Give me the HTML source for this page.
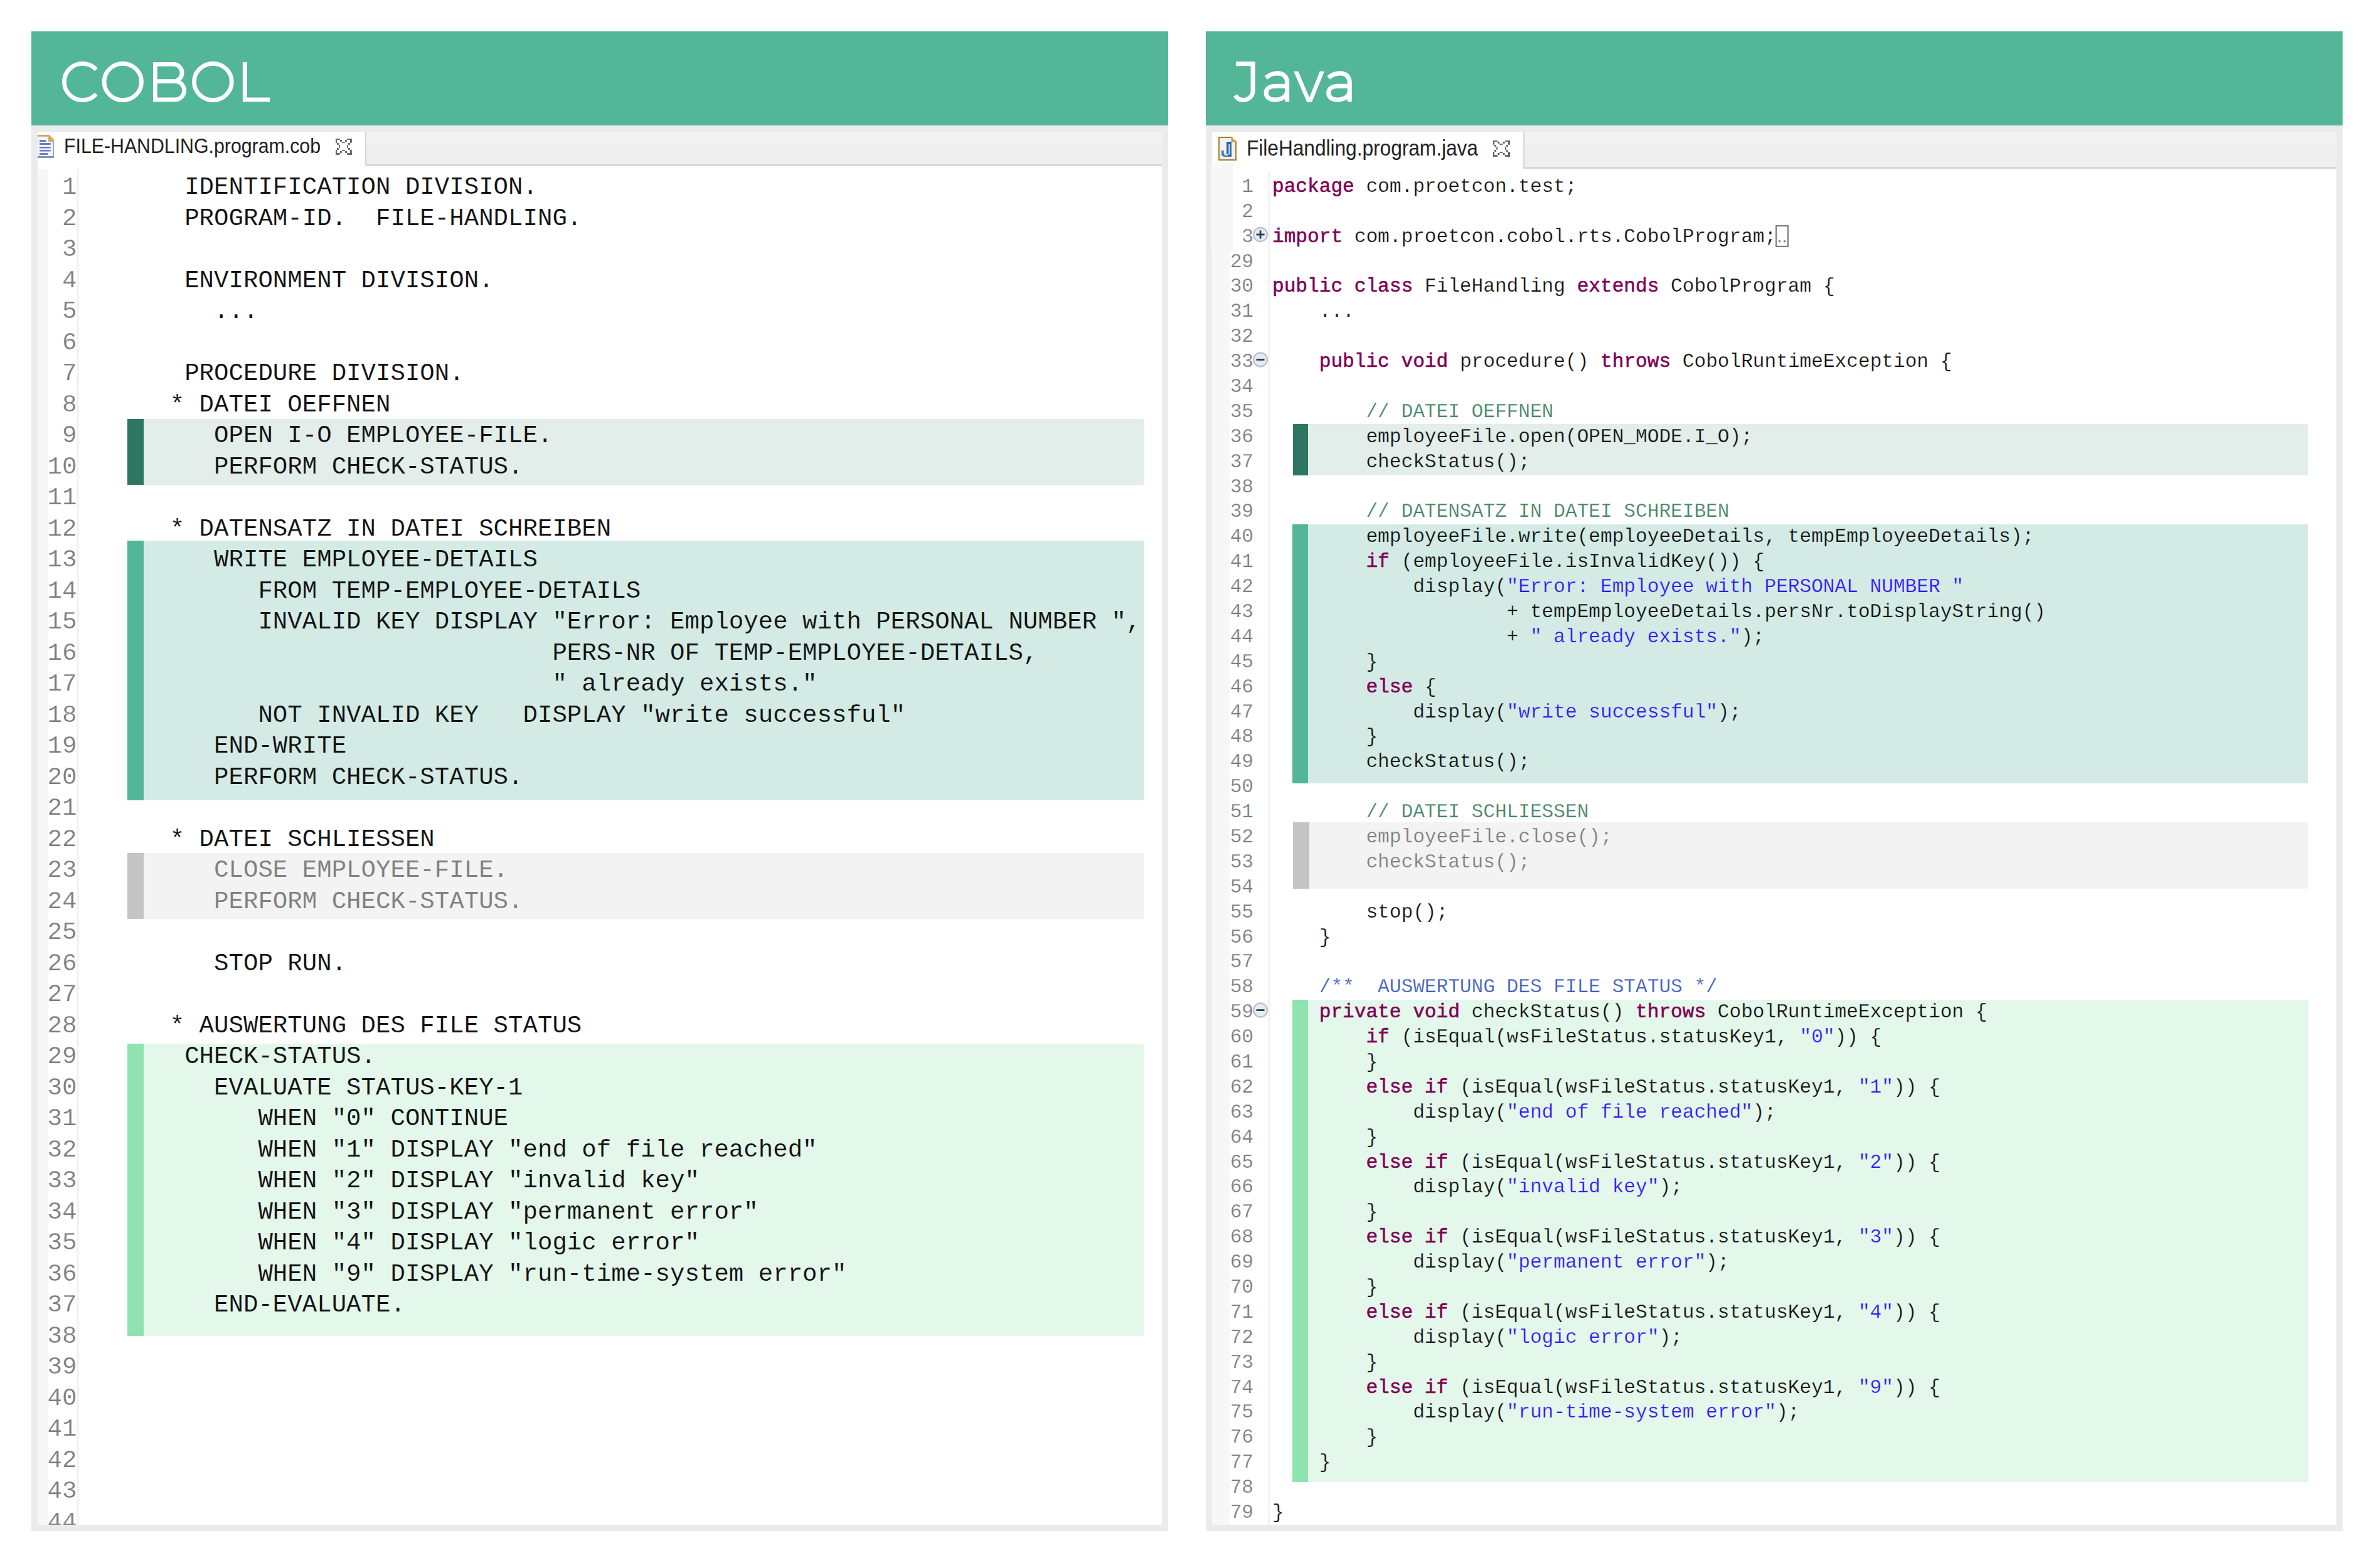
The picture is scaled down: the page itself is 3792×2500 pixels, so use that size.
<!DOCTYPE html>
<html><head><meta charset="utf-8"><title>COBOL vs Java</title><style>
html,body{margin:0;padding:0;background:#fff;}
body{width:3792px;height:2500px;position:relative;overflow:hidden;}
.a{position:absolute;}
.m{font-family:"Liberation Mono",monospace;white-space:pre;line-height:normal;color:#111;}
.s{font-family:"Liberation Sans",sans-serif;white-space:pre;line-height:normal;}
.kw{color:#7f0055;-webkit-text-stroke:0.55px #7f0055 !important;}
.st{color:#3418f5;}
.cm{color:#468666;}
.jd{color:#3f5fbf;}
</style></head><body>
<div class="a" style="left:50px;top:50px;width:1812px;height:150px;background:#52b697;"></div>
<div class="a" style="left:50px;top:200px;width:1812px;height:2241px;background:#ebebeb;"></div>
<div class="a" style="left:60px;top:210px;width:1792px;height:2221px;background:#fff;"></div>
<div class="a" style="left:1922px;top:50px;width:1812px;height:150px;background:#52b697;"></div>
<div class="a" style="left:1922px;top:200px;width:1812px;height:2241px;background:#ebebeb;"></div>
<div class="a" style="left:1932px;top:210px;width:1792px;height:2221px;background:#fff;"></div>
<div class="a" style="left:582px;top:210px;width:1270px;height:55px;background:linear-gradient(#f2f2f2 0,#f2f2f2 19px,#efefef 19px);box-sizing:border-box;border-left:2.7px solid #d6d6d6;border-bottom:3px solid #d6d6d6;"></div>
<div class="a" style="left:2428px;top:210px;width:1296px;height:59px;background:linear-gradient(#f2f2f2 0,#f2f2f2 20px,#efefef 20px);box-sizing:border-box;border-left:2.7px solid #d6d6d6;border-bottom:3px solid #d6d6d6;"></div>
<div class="a" style="left:60px;top:270px;width:16px;height:2161px;background:#f7f7f7;"></div>
<div class="a" style="left:122px;top:270px;width:4px;height:2161px;background:#f3f3f3;"></div>
<div class="a" style="left:1930px;top:259px;width:35px;height:142px;background:#f7f7f7;"></div>
<div class="a" style="left:1932px;top:401px;width:28px;height:2030px;background:#f7f7f7;"></div>
<div class="a" style="left:2021px;top:274px;width:3px;height:2157px;background:#f3f3f3;"></div>
<div class="a" style="left:203px;top:668px;width:1621px;height:105px;background:#e3edea;"></div>
<div class="a" style="left:203px;top:668px;width:26px;height:105px;background:#2e7662;"></div>
<div class="a" style="left:203px;top:862px;width:1621px;height:413.5px;background:#d4ebe5;"></div>
<div class="a" style="left:203px;top:862px;width:26px;height:413.5px;background:#52b697;"></div>
<div class="a" style="left:203px;top:1360px;width:1621px;height:105px;background:#f3f3f3;"></div>
<div class="a" style="left:203px;top:1360px;width:26px;height:105px;background:#c4c4c4;"></div>
<div class="a" style="left:203px;top:1664px;width:1621px;height:466px;background:#e4f7eb;"></div>
<div class="a" style="left:203px;top:1664px;width:26px;height:466px;background:#8fe3b0;"></div>
<div class="a" style="left:2060.5px;top:676px;width:1618.5px;height:82px;background:#e3edea;"></div>
<div class="a" style="left:2060.5px;top:676px;width:24px;height:82px;background:#2e7662;"></div>
<div class="a" style="left:2060px;top:836px;width:1619px;height:413px;background:#d4ebe5;"></div>
<div class="a" style="left:2060px;top:836px;width:25px;height:413px;background:#52b697;"></div>
<div class="a" style="left:2061px;top:1311px;width:1618px;height:105.5px;background:#f3f3f3;"></div>
<div class="a" style="left:2061px;top:1311px;width:26px;height:105.5px;background:#c4c4c4;"></div>
<div class="a" style="left:2060px;top:1594px;width:1619px;height:768.5px;background:#e4f7eb;"></div>
<div class="a" style="left:2060px;top:1594px;width:25px;height:768.5px;background:#8fe3b0;"></div>
<div class="a" style="left:0;top:0;width:1852px;height:2431px;overflow:hidden;">
<div class="a m" style="left:98.95px;top:276.45px;font-size:39.08px;color:#7d7d7d;-webkit-text-stroke:0.25px #fff;">1</div>
<div class="a m" style="left:130.00px;top:276.45px;font-size:39.08px;-webkit-text-stroke:0.12px #fff;">       IDENTIFICATION DIVISION.</div>
<div class="a m" style="left:98.95px;top:325.95px;font-size:39.08px;color:#7d7d7d;-webkit-text-stroke:0.25px #fff;">2</div>
<div class="a m" style="left:130.00px;top:325.95px;font-size:39.08px;-webkit-text-stroke:0.12px #fff;">       PROGRAM-ID.  FILE-HANDLING.</div>
<div class="a m" style="left:98.95px;top:375.45px;font-size:39.08px;color:#7d7d7d;-webkit-text-stroke:0.25px #fff;">3</div>
<div class="a m" style="left:98.95px;top:424.95px;font-size:39.08px;color:#7d7d7d;-webkit-text-stroke:0.25px #fff;">4</div>
<div class="a m" style="left:130.00px;top:424.95px;font-size:39.08px;-webkit-text-stroke:0.12px #fff;">       ENVIRONMENT DIVISION.</div>
<div class="a m" style="left:98.95px;top:474.45px;font-size:39.08px;color:#7d7d7d;-webkit-text-stroke:0.25px #fff;">5</div>
<div class="a m" style="left:130.00px;top:474.45px;font-size:39.08px;-webkit-text-stroke:0.12px #fff;">         ...</div>
<div class="a m" style="left:98.95px;top:523.95px;font-size:39.08px;color:#7d7d7d;-webkit-text-stroke:0.25px #fff;">6</div>
<div class="a m" style="left:98.95px;top:573.45px;font-size:39.08px;color:#7d7d7d;-webkit-text-stroke:0.25px #fff;">7</div>
<div class="a m" style="left:130.00px;top:573.45px;font-size:39.08px;-webkit-text-stroke:0.12px #fff;">       PROCEDURE DIVISION.</div>
<div class="a m" style="left:98.95px;top:622.95px;font-size:39.08px;color:#7d7d7d;-webkit-text-stroke:0.25px #fff;">8</div>
<div class="a m" style="left:130.00px;top:622.95px;font-size:39.08px;-webkit-text-stroke:0.12px #fff;">      * DATEI OEFFNEN</div>
<div class="a m" style="left:98.95px;top:672.45px;font-size:39.08px;color:#7d7d7d;-webkit-text-stroke:0.25px #fff;">9</div>
<div class="a m" style="left:130.00px;top:672.45px;font-size:39.08px;-webkit-text-stroke:0.12px #e3edea;">         OPEN I-O EMPLOYEE-FILE.</div>
<div class="a m" style="left:75.50px;top:721.95px;font-size:39.08px;color:#7d7d7d;-webkit-text-stroke:0.25px #fff;">10</div>
<div class="a m" style="left:130.00px;top:721.95px;font-size:39.08px;-webkit-text-stroke:0.12px #e3edea;">         PERFORM CHECK-STATUS.</div>
<div class="a m" style="left:75.50px;top:771.45px;font-size:39.08px;color:#7d7d7d;-webkit-text-stroke:0.25px #fff;">11</div>
<div class="a m" style="left:75.50px;top:820.95px;font-size:39.08px;color:#7d7d7d;-webkit-text-stroke:0.25px #fff;">12</div>
<div class="a m" style="left:130.00px;top:820.95px;font-size:39.08px;-webkit-text-stroke:0.12px #fff;">      * DATENSATZ IN DATEI SCHREIBEN</div>
<div class="a m" style="left:75.50px;top:870.45px;font-size:39.08px;color:#7d7d7d;-webkit-text-stroke:0.25px #fff;">13</div>
<div class="a m" style="left:130.00px;top:870.45px;font-size:39.08px;-webkit-text-stroke:0.12px #d4ebe5;">         WRITE EMPLOYEE-DETAILS</div>
<div class="a m" style="left:75.50px;top:919.95px;font-size:39.08px;color:#7d7d7d;-webkit-text-stroke:0.25px #fff;">14</div>
<div class="a m" style="left:130.00px;top:919.95px;font-size:39.08px;-webkit-text-stroke:0.12px #d4ebe5;">            FROM TEMP-EMPLOYEE-DETAILS</div>
<div class="a m" style="left:75.50px;top:969.45px;font-size:39.08px;color:#7d7d7d;-webkit-text-stroke:0.25px #fff;">15</div>
<div class="a m" style="left:130.00px;top:969.45px;font-size:39.08px;-webkit-text-stroke:0.12px #d4ebe5;">            INVALID KEY DISPLAY "Error: Employee with PERSONAL NUMBER ",</div>
<div class="a m" style="left:75.50px;top:1018.95px;font-size:39.08px;color:#7d7d7d;-webkit-text-stroke:0.25px #fff;">16</div>
<div class="a m" style="left:130.00px;top:1018.95px;font-size:39.08px;-webkit-text-stroke:0.12px #d4ebe5;">                                PERS-NR OF TEMP-EMPLOYEE-DETAILS,</div>
<div class="a m" style="left:75.50px;top:1068.45px;font-size:39.08px;color:#7d7d7d;-webkit-text-stroke:0.25px #fff;">17</div>
<div class="a m" style="left:130.00px;top:1068.45px;font-size:39.08px;-webkit-text-stroke:0.12px #d4ebe5;">                                " already exists."</div>
<div class="a m" style="left:75.50px;top:1117.95px;font-size:39.08px;color:#7d7d7d;-webkit-text-stroke:0.25px #fff;">18</div>
<div class="a m" style="left:130.00px;top:1117.95px;font-size:39.08px;-webkit-text-stroke:0.12px #d4ebe5;">            NOT INVALID KEY   DISPLAY "write successful"</div>
<div class="a m" style="left:75.50px;top:1167.45px;font-size:39.08px;color:#7d7d7d;-webkit-text-stroke:0.25px #fff;">19</div>
<div class="a m" style="left:130.00px;top:1167.45px;font-size:39.08px;-webkit-text-stroke:0.12px #d4ebe5;">         END-WRITE</div>
<div class="a m" style="left:75.50px;top:1216.95px;font-size:39.08px;color:#7d7d7d;-webkit-text-stroke:0.25px #fff;">20</div>
<div class="a m" style="left:130.00px;top:1216.95px;font-size:39.08px;-webkit-text-stroke:0.12px #d4ebe5;">         PERFORM CHECK-STATUS.</div>
<div class="a m" style="left:75.50px;top:1266.45px;font-size:39.08px;color:#7d7d7d;-webkit-text-stroke:0.25px #fff;">21</div>
<div class="a m" style="left:75.50px;top:1315.95px;font-size:39.08px;color:#7d7d7d;-webkit-text-stroke:0.25px #fff;">22</div>
<div class="a m" style="left:130.00px;top:1315.95px;font-size:39.08px;-webkit-text-stroke:0.12px #fff;">      * DATEI SCHLIESSEN</div>
<div class="a m" style="left:75.50px;top:1365.45px;font-size:39.08px;color:#7d7d7d;-webkit-text-stroke:0.25px #fff;">23</div>
<div class="a m" style="left:130.00px;top:1365.45px;font-size:39.08px;color:#7f7f7f;-webkit-text-stroke:0.12px #f3f3f3;">         CLOSE EMPLOYEE-FILE.</div>
<div class="a m" style="left:75.50px;top:1414.95px;font-size:39.08px;color:#7d7d7d;-webkit-text-stroke:0.25px #fff;">24</div>
<div class="a m" style="left:130.00px;top:1414.95px;font-size:39.08px;color:#7f7f7f;-webkit-text-stroke:0.12px #f3f3f3;">         PERFORM CHECK-STATUS.</div>
<div class="a m" style="left:75.50px;top:1464.45px;font-size:39.08px;color:#7d7d7d;-webkit-text-stroke:0.25px #fff;">25</div>
<div class="a m" style="left:75.50px;top:1513.95px;font-size:39.08px;color:#7d7d7d;-webkit-text-stroke:0.25px #fff;">26</div>
<div class="a m" style="left:130.00px;top:1513.95px;font-size:39.08px;-webkit-text-stroke:0.12px #fff;">         STOP RUN.</div>
<div class="a m" style="left:75.50px;top:1563.45px;font-size:39.08px;color:#7d7d7d;-webkit-text-stroke:0.25px #fff;">27</div>
<div class="a m" style="left:75.50px;top:1612.95px;font-size:39.08px;color:#7d7d7d;-webkit-text-stroke:0.25px #fff;">28</div>
<div class="a m" style="left:130.00px;top:1612.95px;font-size:39.08px;-webkit-text-stroke:0.12px #fff;">      * AUSWERTUNG DES FILE STATUS</div>
<div class="a m" style="left:75.50px;top:1662.45px;font-size:39.08px;color:#7d7d7d;-webkit-text-stroke:0.25px #fff;">29</div>
<div class="a m" style="left:130.00px;top:1662.45px;font-size:39.08px;-webkit-text-stroke:0.12px #e4f7eb;">       CHECK-STATUS.</div>
<div class="a m" style="left:75.50px;top:1711.95px;font-size:39.08px;color:#7d7d7d;-webkit-text-stroke:0.25px #fff;">30</div>
<div class="a m" style="left:130.00px;top:1711.95px;font-size:39.08px;-webkit-text-stroke:0.12px #e4f7eb;">         EVALUATE STATUS-KEY-1</div>
<div class="a m" style="left:75.50px;top:1761.45px;font-size:39.08px;color:#7d7d7d;-webkit-text-stroke:0.25px #fff;">31</div>
<div class="a m" style="left:130.00px;top:1761.45px;font-size:39.08px;-webkit-text-stroke:0.12px #e4f7eb;">            WHEN "0" CONTINUE</div>
<div class="a m" style="left:75.50px;top:1810.95px;font-size:39.08px;color:#7d7d7d;-webkit-text-stroke:0.25px #fff;">32</div>
<div class="a m" style="left:130.00px;top:1810.95px;font-size:39.08px;-webkit-text-stroke:0.12px #e4f7eb;">            WHEN "1" DISPLAY "end of file reached"</div>
<div class="a m" style="left:75.50px;top:1860.45px;font-size:39.08px;color:#7d7d7d;-webkit-text-stroke:0.25px #fff;">33</div>
<div class="a m" style="left:130.00px;top:1860.45px;font-size:39.08px;-webkit-text-stroke:0.12px #e4f7eb;">            WHEN "2" DISPLAY "invalid key"</div>
<div class="a m" style="left:75.50px;top:1909.95px;font-size:39.08px;color:#7d7d7d;-webkit-text-stroke:0.25px #fff;">34</div>
<div class="a m" style="left:130.00px;top:1909.95px;font-size:39.08px;-webkit-text-stroke:0.12px #e4f7eb;">            WHEN "3" DISPLAY "permanent error"</div>
<div class="a m" style="left:75.50px;top:1959.45px;font-size:39.08px;color:#7d7d7d;-webkit-text-stroke:0.25px #fff;">35</div>
<div class="a m" style="left:130.00px;top:1959.45px;font-size:39.08px;-webkit-text-stroke:0.12px #e4f7eb;">            WHEN "4" DISPLAY "logic error"</div>
<div class="a m" style="left:75.50px;top:2008.95px;font-size:39.08px;color:#7d7d7d;-webkit-text-stroke:0.25px #fff;">36</div>
<div class="a m" style="left:130.00px;top:2008.95px;font-size:39.08px;-webkit-text-stroke:0.12px #e4f7eb;">            WHEN "9" DISPLAY "run-time-system error"</div>
<div class="a m" style="left:75.50px;top:2058.45px;font-size:39.08px;color:#7d7d7d;-webkit-text-stroke:0.25px #fff;">37</div>
<div class="a m" style="left:130.00px;top:2058.45px;font-size:39.08px;-webkit-text-stroke:0.12px #e4f7eb;">         END-EVALUATE.</div>
<div class="a m" style="left:75.50px;top:2107.95px;font-size:39.08px;color:#7d7d7d;-webkit-text-stroke:0.25px #fff;">38</div>
<div class="a m" style="left:75.50px;top:2157.45px;font-size:39.08px;color:#7d7d7d;-webkit-text-stroke:0.25px #fff;">39</div>
<div class="a m" style="left:75.50px;top:2206.95px;font-size:39.08px;color:#7d7d7d;-webkit-text-stroke:0.25px #fff;">40</div>
<div class="a m" style="left:75.50px;top:2256.45px;font-size:39.08px;color:#7d7d7d;-webkit-text-stroke:0.25px #fff;">41</div>
<div class="a m" style="left:75.50px;top:2305.95px;font-size:39.08px;color:#7d7d7d;-webkit-text-stroke:0.25px #fff;">42</div>
<div class="a m" style="left:75.50px;top:2355.45px;font-size:39.08px;color:#7d7d7d;-webkit-text-stroke:0.25px #fff;">43</div>
<div class="a m" style="left:75.50px;top:2404.95px;font-size:39.08px;color:#7d7d7d;-webkit-text-stroke:0.25px #fff;">44</div>
</div>
<div class="a m" style="left:1979.32px;top:279.87px;font-size:31.13px;color:#7d7d7d;-webkit-text-stroke:0.25px #fff;">1</div>
<div class="a m" style="left:2028.00px;top:279.87px;font-size:31.13px;-webkit-text-stroke:0.25px #fff;"><span class="kw">package</span> com.proetcon.test;</div>
<div class="a m" style="left:1979.32px;top:319.76px;font-size:31.13px;color:#7d7d7d;-webkit-text-stroke:0.25px #fff;">2</div>
<div class="a m" style="left:1979.32px;top:359.65px;font-size:31.13px;color:#7d7d7d;-webkit-text-stroke:0.25px #fff;">3</div>
<div class="a m" style="left:2028.00px;top:359.65px;font-size:31.13px;-webkit-text-stroke:0.25px #fff;"><span class="kw">import</span> com.proetcon.cobol.rts.CobolProgram;</div>
<div class="a m" style="left:1960.64px;top:399.54px;font-size:31.13px;color:#7d7d7d;-webkit-text-stroke:0.25px #fff;">29</div>
<div class="a m" style="left:1960.64px;top:439.43px;font-size:31.13px;color:#7d7d7d;-webkit-text-stroke:0.25px #fff;">30</div>
<div class="a m" style="left:2028.00px;top:439.43px;font-size:31.13px;-webkit-text-stroke:0.25px #fff;"><span class="kw">public</span> <span class="kw">class</span> FileHandling <span class="kw">extends</span> CobolProgram {</div>
<div class="a m" style="left:1960.64px;top:479.32px;font-size:31.13px;color:#7d7d7d;-webkit-text-stroke:0.25px #fff;">31</div>
<div class="a m" style="left:2028.00px;top:479.32px;font-size:31.13px;-webkit-text-stroke:0.25px #fff;">    ...</div>
<div class="a m" style="left:1960.64px;top:519.21px;font-size:31.13px;color:#7d7d7d;-webkit-text-stroke:0.25px #fff;">32</div>
<div class="a m" style="left:1960.64px;top:559.10px;font-size:31.13px;color:#7d7d7d;-webkit-text-stroke:0.25px #fff;">33</div>
<div class="a m" style="left:2028.00px;top:559.10px;font-size:31.13px;-webkit-text-stroke:0.25px #fff;">    <span class="kw">public</span> <span class="kw">void</span> procedure() <span class="kw">throws</span> CobolRuntimeException {</div>
<div class="a m" style="left:1960.64px;top:598.99px;font-size:31.13px;color:#7d7d7d;-webkit-text-stroke:0.25px #fff;">34</div>
<div class="a m" style="left:1960.64px;top:638.88px;font-size:31.13px;color:#7d7d7d;-webkit-text-stroke:0.25px #fff;">35</div>
<div class="a m" style="left:2028.00px;top:638.88px;font-size:31.13px;-webkit-text-stroke:0.25px #fff;">        <span class="cm">// DATEI OEFFNEN</span></div>
<div class="a m" style="left:1960.64px;top:678.77px;font-size:31.13px;color:#7d7d7d;-webkit-text-stroke:0.25px #fff;">36</div>
<div class="a m" style="left:2028.00px;top:678.77px;font-size:31.13px;-webkit-text-stroke:0.25px #e3edea;">        employeeFile.open(OPEN_MODE.I_O);</div>
<div class="a m" style="left:1960.64px;top:718.66px;font-size:31.13px;color:#7d7d7d;-webkit-text-stroke:0.25px #fff;">37</div>
<div class="a m" style="left:2028.00px;top:718.66px;font-size:31.13px;-webkit-text-stroke:0.25px #e3edea;">        checkStatus();</div>
<div class="a m" style="left:1960.64px;top:758.55px;font-size:31.13px;color:#7d7d7d;-webkit-text-stroke:0.25px #fff;">38</div>
<div class="a m" style="left:1960.64px;top:798.44px;font-size:31.13px;color:#7d7d7d;-webkit-text-stroke:0.25px #fff;">39</div>
<div class="a m" style="left:2028.00px;top:798.44px;font-size:31.13px;-webkit-text-stroke:0.25px #fff;">        <span class="cm">// DATENSATZ IN DATEI SCHREIBEN</span></div>
<div class="a m" style="left:1960.64px;top:838.33px;font-size:31.13px;color:#7d7d7d;-webkit-text-stroke:0.25px #fff;">40</div>
<div class="a m" style="left:2028.00px;top:838.33px;font-size:31.13px;-webkit-text-stroke:0.25px #d4ebe5;">        employeeFile.write(employeeDetails, tempEmployeeDetails);</div>
<div class="a m" style="left:1960.64px;top:878.22px;font-size:31.13px;color:#7d7d7d;-webkit-text-stroke:0.25px #fff;">41</div>
<div class="a m" style="left:2028.00px;top:878.22px;font-size:31.13px;-webkit-text-stroke:0.25px #d4ebe5;">        <span class="kw">if</span> (employeeFile.isInvalidKey()) {</div>
<div class="a m" style="left:1960.64px;top:918.11px;font-size:31.13px;color:#7d7d7d;-webkit-text-stroke:0.25px #fff;">42</div>
<div class="a m" style="left:2028.00px;top:918.11px;font-size:31.13px;-webkit-text-stroke:0.25px #d4ebe5;">            display(<span class="st">"Error: Employee with PERSONAL NUMBER "</span></div>
<div class="a m" style="left:1960.64px;top:958.00px;font-size:31.13px;color:#7d7d7d;-webkit-text-stroke:0.25px #fff;">43</div>
<div class="a m" style="left:2028.00px;top:958.00px;font-size:31.13px;-webkit-text-stroke:0.25px #d4ebe5;">                    + tempEmployeeDetails.persNr.toDisplayString()</div>
<div class="a m" style="left:1960.64px;top:997.89px;font-size:31.13px;color:#7d7d7d;-webkit-text-stroke:0.25px #fff;">44</div>
<div class="a m" style="left:2028.00px;top:997.89px;font-size:31.13px;-webkit-text-stroke:0.25px #d4ebe5;">                    + <span class="st">" already exists."</span>);</div>
<div class="a m" style="left:1960.64px;top:1037.78px;font-size:31.13px;color:#7d7d7d;-webkit-text-stroke:0.25px #fff;">45</div>
<div class="a m" style="left:2028.00px;top:1037.78px;font-size:31.13px;-webkit-text-stroke:0.25px #d4ebe5;">        }</div>
<div class="a m" style="left:1960.64px;top:1077.67px;font-size:31.13px;color:#7d7d7d;-webkit-text-stroke:0.25px #fff;">46</div>
<div class="a m" style="left:2028.00px;top:1077.67px;font-size:31.13px;-webkit-text-stroke:0.25px #d4ebe5;">        <span class="kw">else</span> {</div>
<div class="a m" style="left:1960.64px;top:1117.56px;font-size:31.13px;color:#7d7d7d;-webkit-text-stroke:0.25px #fff;">47</div>
<div class="a m" style="left:2028.00px;top:1117.56px;font-size:31.13px;-webkit-text-stroke:0.25px #d4ebe5;">            display(<span class="st">"write successful"</span>);</div>
<div class="a m" style="left:1960.64px;top:1157.45px;font-size:31.13px;color:#7d7d7d;-webkit-text-stroke:0.25px #fff;">48</div>
<div class="a m" style="left:2028.00px;top:1157.45px;font-size:31.13px;-webkit-text-stroke:0.25px #d4ebe5;">        }</div>
<div class="a m" style="left:1960.64px;top:1197.34px;font-size:31.13px;color:#7d7d7d;-webkit-text-stroke:0.25px #fff;">49</div>
<div class="a m" style="left:2028.00px;top:1197.34px;font-size:31.13px;-webkit-text-stroke:0.25px #d4ebe5;">        checkStatus();</div>
<div class="a m" style="left:1960.64px;top:1237.23px;font-size:31.13px;color:#7d7d7d;-webkit-text-stroke:0.25px #fff;">50</div>
<div class="a m" style="left:1960.64px;top:1277.12px;font-size:31.13px;color:#7d7d7d;-webkit-text-stroke:0.25px #fff;">51</div>
<div class="a m" style="left:2028.00px;top:1277.12px;font-size:31.13px;-webkit-text-stroke:0.25px #fff;">        <span class="cm">// DATEI SCHLIESSEN</span></div>
<div class="a m" style="left:1960.64px;top:1317.01px;font-size:31.13px;color:#7d7d7d;-webkit-text-stroke:0.25px #fff;">52</div>
<div class="a m" style="left:2028.00px;top:1317.01px;font-size:31.13px;color:#7f7f7f;-webkit-text-stroke:0.25px #f3f3f3;">        employeeFile.close();</div>
<div class="a m" style="left:1960.64px;top:1356.90px;font-size:31.13px;color:#7d7d7d;-webkit-text-stroke:0.25px #fff;">53</div>
<div class="a m" style="left:2028.00px;top:1356.90px;font-size:31.13px;color:#7f7f7f;-webkit-text-stroke:0.25px #f3f3f3;">        checkStatus();</div>
<div class="a m" style="left:1960.64px;top:1396.79px;font-size:31.13px;color:#7d7d7d;-webkit-text-stroke:0.25px #fff;">54</div>
<div class="a m" style="left:1960.64px;top:1436.68px;font-size:31.13px;color:#7d7d7d;-webkit-text-stroke:0.25px #fff;">55</div>
<div class="a m" style="left:2028.00px;top:1436.68px;font-size:31.13px;-webkit-text-stroke:0.25px #fff;">        stop();</div>
<div class="a m" style="left:1960.64px;top:1476.57px;font-size:31.13px;color:#7d7d7d;-webkit-text-stroke:0.25px #fff;">56</div>
<div class="a m" style="left:2028.00px;top:1476.57px;font-size:31.13px;-webkit-text-stroke:0.25px #fff;">    }</div>
<div class="a m" style="left:1960.64px;top:1516.46px;font-size:31.13px;color:#7d7d7d;-webkit-text-stroke:0.25px #fff;">57</div>
<div class="a m" style="left:1960.64px;top:1556.35px;font-size:31.13px;color:#7d7d7d;-webkit-text-stroke:0.25px #fff;">58</div>
<div class="a m" style="left:2028.00px;top:1556.35px;font-size:31.13px;-webkit-text-stroke:0.25px #fff;">    <span class="jd">/**  AUSWERTUNG DES FILE STATUS */</span></div>
<div class="a m" style="left:1960.64px;top:1596.24px;font-size:31.13px;color:#7d7d7d;-webkit-text-stroke:0.25px #fff;">59</div>
<div class="a m" style="left:2028.00px;top:1596.24px;font-size:31.13px;-webkit-text-stroke:0.25px #e4f7eb;">    <span class="kw">private</span> <span class="kw">void</span> checkStatus() <span class="kw">throws</span> CobolRuntimeException {</div>
<div class="a m" style="left:1960.64px;top:1636.13px;font-size:31.13px;color:#7d7d7d;-webkit-text-stroke:0.25px #fff;">60</div>
<div class="a m" style="left:2028.00px;top:1636.13px;font-size:31.13px;-webkit-text-stroke:0.25px #e4f7eb;">        <span class="kw">if</span> (isEqual(wsFileStatus.statusKey1, <span class="st">"0"</span>)) {</div>
<div class="a m" style="left:1960.64px;top:1676.02px;font-size:31.13px;color:#7d7d7d;-webkit-text-stroke:0.25px #fff;">61</div>
<div class="a m" style="left:2028.00px;top:1676.02px;font-size:31.13px;-webkit-text-stroke:0.25px #e4f7eb;">        }</div>
<div class="a m" style="left:1960.64px;top:1715.91px;font-size:31.13px;color:#7d7d7d;-webkit-text-stroke:0.25px #fff;">62</div>
<div class="a m" style="left:2028.00px;top:1715.91px;font-size:31.13px;-webkit-text-stroke:0.25px #e4f7eb;">        <span class="kw">else</span> <span class="kw">if</span> (isEqual(wsFileStatus.statusKey1, <span class="st">"1"</span>)) {</div>
<div class="a m" style="left:1960.64px;top:1755.80px;font-size:31.13px;color:#7d7d7d;-webkit-text-stroke:0.25px #fff;">63</div>
<div class="a m" style="left:2028.00px;top:1755.80px;font-size:31.13px;-webkit-text-stroke:0.25px #e4f7eb;">            display(<span class="st">"end of file reached"</span>);</div>
<div class="a m" style="left:1960.64px;top:1795.69px;font-size:31.13px;color:#7d7d7d;-webkit-text-stroke:0.25px #fff;">64</div>
<div class="a m" style="left:2028.00px;top:1795.69px;font-size:31.13px;-webkit-text-stroke:0.25px #e4f7eb;">        }</div>
<div class="a m" style="left:1960.64px;top:1835.58px;font-size:31.13px;color:#7d7d7d;-webkit-text-stroke:0.25px #fff;">65</div>
<div class="a m" style="left:2028.00px;top:1835.58px;font-size:31.13px;-webkit-text-stroke:0.25px #e4f7eb;">        <span class="kw">else</span> <span class="kw">if</span> (isEqual(wsFileStatus.statusKey1, <span class="st">"2"</span>)) {</div>
<div class="a m" style="left:1960.64px;top:1875.47px;font-size:31.13px;color:#7d7d7d;-webkit-text-stroke:0.25px #fff;">66</div>
<div class="a m" style="left:2028.00px;top:1875.47px;font-size:31.13px;-webkit-text-stroke:0.25px #e4f7eb;">            display(<span class="st">"invalid key"</span>);</div>
<div class="a m" style="left:1960.64px;top:1915.36px;font-size:31.13px;color:#7d7d7d;-webkit-text-stroke:0.25px #fff;">67</div>
<div class="a m" style="left:2028.00px;top:1915.36px;font-size:31.13px;-webkit-text-stroke:0.25px #e4f7eb;">        }</div>
<div class="a m" style="left:1960.64px;top:1955.25px;font-size:31.13px;color:#7d7d7d;-webkit-text-stroke:0.25px #fff;">68</div>
<div class="a m" style="left:2028.00px;top:1955.25px;font-size:31.13px;-webkit-text-stroke:0.25px #e4f7eb;">        <span class="kw">else</span> <span class="kw">if</span> (isEqual(wsFileStatus.statusKey1, <span class="st">"3"</span>)) {</div>
<div class="a m" style="left:1960.64px;top:1995.14px;font-size:31.13px;color:#7d7d7d;-webkit-text-stroke:0.25px #fff;">69</div>
<div class="a m" style="left:2028.00px;top:1995.14px;font-size:31.13px;-webkit-text-stroke:0.25px #e4f7eb;">            display(<span class="st">"permanent error"</span>);</div>
<div class="a m" style="left:1960.64px;top:2035.03px;font-size:31.13px;color:#7d7d7d;-webkit-text-stroke:0.25px #fff;">70</div>
<div class="a m" style="left:2028.00px;top:2035.03px;font-size:31.13px;-webkit-text-stroke:0.25px #e4f7eb;">        }</div>
<div class="a m" style="left:1960.64px;top:2074.92px;font-size:31.13px;color:#7d7d7d;-webkit-text-stroke:0.25px #fff;">71</div>
<div class="a m" style="left:2028.00px;top:2074.92px;font-size:31.13px;-webkit-text-stroke:0.25px #e4f7eb;">        <span class="kw">else</span> <span class="kw">if</span> (isEqual(wsFileStatus.statusKey1, <span class="st">"4"</span>)) {</div>
<div class="a m" style="left:1960.64px;top:2114.81px;font-size:31.13px;color:#7d7d7d;-webkit-text-stroke:0.25px #fff;">72</div>
<div class="a m" style="left:2028.00px;top:2114.81px;font-size:31.13px;-webkit-text-stroke:0.25px #e4f7eb;">            display(<span class="st">"logic error"</span>);</div>
<div class="a m" style="left:1960.64px;top:2154.70px;font-size:31.13px;color:#7d7d7d;-webkit-text-stroke:0.25px #fff;">73</div>
<div class="a m" style="left:2028.00px;top:2154.70px;font-size:31.13px;-webkit-text-stroke:0.25px #e4f7eb;">        }</div>
<div class="a m" style="left:1960.64px;top:2194.59px;font-size:31.13px;color:#7d7d7d;-webkit-text-stroke:0.25px #fff;">74</div>
<div class="a m" style="left:2028.00px;top:2194.59px;font-size:31.13px;-webkit-text-stroke:0.25px #e4f7eb;">        <span class="kw">else</span> <span class="kw">if</span> (isEqual(wsFileStatus.statusKey1, <span class="st">"9"</span>)) {</div>
<div class="a m" style="left:1960.64px;top:2234.48px;font-size:31.13px;color:#7d7d7d;-webkit-text-stroke:0.25px #fff;">75</div>
<div class="a m" style="left:2028.00px;top:2234.48px;font-size:31.13px;-webkit-text-stroke:0.25px #e4f7eb;">            display(<span class="st">"run-time-system error"</span>);</div>
<div class="a m" style="left:1960.64px;top:2274.37px;font-size:31.13px;color:#7d7d7d;-webkit-text-stroke:0.25px #fff;">76</div>
<div class="a m" style="left:2028.00px;top:2274.37px;font-size:31.13px;-webkit-text-stroke:0.25px #e4f7eb;">        }</div>
<div class="a m" style="left:1960.64px;top:2314.26px;font-size:31.13px;color:#7d7d7d;-webkit-text-stroke:0.25px #fff;">77</div>
<div class="a m" style="left:2028.00px;top:2314.26px;font-size:31.13px;-webkit-text-stroke:0.25px #e4f7eb;">    }</div>
<div class="a m" style="left:1960.64px;top:2354.15px;font-size:31.13px;color:#7d7d7d;-webkit-text-stroke:0.25px #fff;">78</div>
<div class="a m" style="left:1960.64px;top:2394.04px;font-size:31.13px;color:#7d7d7d;-webkit-text-stroke:0.25px #fff;">79</div>
<div class="a m" style="left:2028.00px;top:2394.04px;font-size:31.13px;-webkit-text-stroke:0.25px #fff;">}</div>
<div class="a s" style="left:101.5px;top:213.77px;font-size:33.4px;transform:scaleX(0.907);transform-origin:0 0;color:#222;">FILE-HANDLING.program.cob</div>
<div class="a s" style="left:1987px;top:216.32px;font-size:35px;transform:scaleX(0.903);transform-origin:0 0;color:#222;">FileHandling.program.java</div>
<svg class="a" style="left:0;top:0" width="3792" height="2500" viewBox="0 0 3792 2500"><path style="stroke:#fff;stroke-width:6.8;fill:none;" d="M153.3,111 A29.2,29.2 0 1 0 153.3,150"/><ellipse style="stroke:#fff;stroke-width:6.8;fill:none;" cx="195.75" cy="130.5" rx="29.75" ry="29.1"/><path style="stroke:#fff;stroke-width:6.8;fill:none;" d="M247.35,98.9 V162.2 M244,102.3 H276.5 A13.65,13.65 0 0 1 276.5,129.6 H247.35 M247.35,129.6 H279 A14.6,14.6 0 0 1 279,158.85 H244"/><ellipse style="stroke:#fff;stroke-width:6.8;fill:none;" cx="339.4" cy="130.5" rx="29.9" ry="29.1"/><path style="stroke:#fff;stroke-width:6.8;fill:none;" d="M390.25,98.9 V158.85 H430"/><path style="stroke:#fff;stroke-width:7.1;fill:none;" d="M1970.2,101.7 H1997.1 V144.4 A15.1,15.1 0 0 1 1982,159.5 A15.1,15.1 0 0 1 1968.9,152"/><path style="stroke:#fff;stroke-width:7.1;fill:none;" d="M2018,124 C2023,119.5 2029,116.9 2036,116.9 C2046,116.9 2051.6,122.5 2051.6,132 V161.9 M2051.6,137.3 H2033 C2023.5,137.3 2018,141.5 2018,148.3 C2018,155 2023.5,159 2032,159 C2043,159 2051.6,153.5 2051.6,145"/><polygon fill="#fff" points="2062.2,113.7 2069.4,113.7 2087.1,155.5 2103.8,113.7 2111,113.7 2090.9,162.9 2083.3,162.9"/><path style="stroke:#fff;stroke-width:7.1;fill:none;" d="M2117.6,124 C2122.6,119.5 2128.6,116.9 2135.6,116.9 C2145.6,116.9 2151.2,122.5 2151.2,132 V161.9 M2151.2,137.3 H2132.6 C2123.1,137.3 2117.6,141.5 2117.6,148.3 C2117.6,155 2123.1,159 2131.6,159 C2142.6,159 2151.2,153.5 2151.2,145"/><rect x="60" y="217.8" width="24.5" height="31.5" fill="#f3f6fb"/><rect x="60" y="215" width="18.8" height="2.8" fill="#c8a86a"/><polygon fill="#d2ad62" points="78.8,215 86,222.5 86,226 76.5,226 76.5,217.8 78.8,217.8"/><rect x="84" y="226" width="1.9" height="23" fill="#98a4b6"/><rect x="60" y="249" width="25.9" height="2.8" fill="#7b8cab"/><rect x="63" y="223" width="10" height="3" fill="#6a7fc2"/><rect x="63" y="228" width="17.799999999999997" height="3" fill="#6a7fc2"/><rect x="63" y="234" width="17.799999999999997" height="2.5" fill="#6a7fc2"/><rect x="63" y="239" width="17.799999999999997" height="2.5" fill="#6a7fc2"/><rect x="63" y="244" width="13" height="3" fill="#6a7fc2"/><rect x="1943" y="219" width="27" height="36" fill="#eef3fa" stroke="#ab8429" stroke-width="2.1"/><polygon fill="#fff" points="1962.5,217 1972,217 1972,226.5"/><polygon fill="#c9a24a" points="1962.5,218 1971,226.5 1962.5,226.5"/><rect x="1955" y="226" width="7.9" height="22" fill="#22619c"/><rect x="1950" y="245.3" width="12.9" height="4.5" fill="#22619c"/><rect x="1947" y="240" width="3.5" height="8" fill="#3a6fb0"/><rect x="1958.3" y="229.5" width="1.7" height="17" fill="#e4e2ef"/><rect x="1960" y="229.5" width="2.9" height="16" fill="#2f7797"/><rect x="1951.5" y="245.8" width="6" height="2" fill="#f4f6fb"/><rect x="535.05" y="221.05" width="6.77" height="1.84" fill="#5c5c5c"/><rect x="535.05" y="221.05" width="1.84" height="6.77" fill="#5c5c5c"/><rect x="542.05" y="223.00" width="2.75" height="2.87" fill="#5c5c5c"/><rect x="545.04" y="226.10" width="4.71" height="1.72" fill="#5c5c5c"/><rect x="550.09" y="223.00" width="2.75" height="2.87" fill="#5c5c5c"/><rect x="553.07" y="221.05" width="7.69" height="1.84" fill="#5c5c5c"/><rect x="558.01" y="221.05" width="2.75" height="6.77" fill="#5c5c5c"/><rect x="537.00" y="228.05" width="2.87" height="2.75" fill="#5c5c5c"/><rect x="540.10" y="231.04" width="1.72" height="4.71" fill="#5c5c5c"/><rect x="537.00" y="236.09" width="2.87" height="2.75" fill="#5c5c5c"/><rect x="535.05" y="239.07" width="1.84" height="7.69" fill="#5c5c5c"/><rect x="535.05" y="244.12" width="6.77" height="2.64" fill="#5c5c5c"/><rect x="542.05" y="241.02" width="2.75" height="2.87" fill="#5c5c5c"/><rect x="545.04" y="239.07" width="4.71" height="1.72" fill="#5c5c5c"/><rect x="550.09" y="241.02" width="2.75" height="2.87" fill="#5c5c5c"/><rect x="553.07" y="244.12" width="7.69" height="2.64" fill="#5c5c5c"/><rect x="558.01" y="239.07" width="2.75" height="7.69" fill="#5c5c5c"/><rect x="555.02" y="228.05" width="2.87" height="2.75" fill="#5c5c5c"/><rect x="553.07" y="231.04" width="1.72" height="4.71" fill="#5c5c5c"/><rect x="555.02" y="236.09" width="2.87" height="2.75" fill="#5c5c5c"/><rect x="2380.00" y="224.00" width="7.08" height="1.85" fill="#5c5c5c"/><rect x="2380.00" y="224.00" width="1.92" height="6.81" fill="#5c5c5c"/><rect x="2387.32" y="225.96" width="2.88" height="2.88" fill="#5c5c5c"/><rect x="2390.44" y="229.08" width="4.92" height="1.73" fill="#5c5c5c"/><rect x="2395.71" y="225.96" width="2.88" height="2.88" fill="#5c5c5c"/><rect x="2398.83" y="224.00" width="8.04" height="1.85" fill="#5c5c5c"/><rect x="2403.99" y="224.00" width="2.88" height="6.81" fill="#5c5c5c"/><rect x="2382.04" y="231.04" width="3.00" height="2.77" fill="#5c5c5c"/><rect x="2385.28" y="234.04" width="1.80" height="4.73" fill="#5c5c5c"/><rect x="2382.04" y="239.11" width="3.00" height="2.77" fill="#5c5c5c"/><rect x="2380.00" y="242.11" width="1.92" height="7.73" fill="#5c5c5c"/><rect x="2380.00" y="247.19" width="7.08" height="2.65" fill="#5c5c5c"/><rect x="2387.32" y="244.07" width="2.88" height="2.88" fill="#5c5c5c"/><rect x="2390.44" y="242.11" width="4.92" height="1.73" fill="#5c5c5c"/><rect x="2395.71" y="244.07" width="2.88" height="2.88" fill="#5c5c5c"/><rect x="2398.83" y="247.19" width="8.04" height="2.65" fill="#5c5c5c"/><rect x="2403.99" y="242.11" width="2.88" height="7.73" fill="#5c5c5c"/><rect x="2400.87" y="231.04" width="3.00" height="2.77" fill="#5c5c5c"/><rect x="2398.83" y="234.04" width="1.80" height="4.73" fill="#5c5c5c"/><rect x="2400.87" y="239.11" width="3.00" height="2.77" fill="#5c5c5c"/><circle cx="2009" cy="373.98" r="11" fill="#e4ecf1" stroke="#bcc3cf" stroke-width="2.4"/><rect x="2002.5" y="372.58000000000004" width="13" height="2.8" fill="#27404a"/><rect x="2007.6" y="367.48" width="2.8" height="13" fill="#27404a"/><circle cx="2009" cy="573.43" r="11" fill="#e4ecf1" stroke="#bcc3cf" stroke-width="2.4"/><rect x="2002.5" y="572.03" width="13" height="2.8" fill="#27404a"/><circle cx="2009" cy="1610.5700000000002" r="11" fill="#e4ecf1" stroke="#bcc3cf" stroke-width="2.4"/><rect x="2002.5" y="1609.17" width="13" height="2.8" fill="#27404a"/><rect x="2831.1" y="360.1" width="18.8" height="32.8" fill="#fff" stroke="#7a7a7a" stroke-width="2.1"/><rect x="2835" y="383.2" width="3" height="3" fill="#777"/><rect x="2843" y="383.2" width="3" height="3" fill="#777"/></svg>
</body></html>
